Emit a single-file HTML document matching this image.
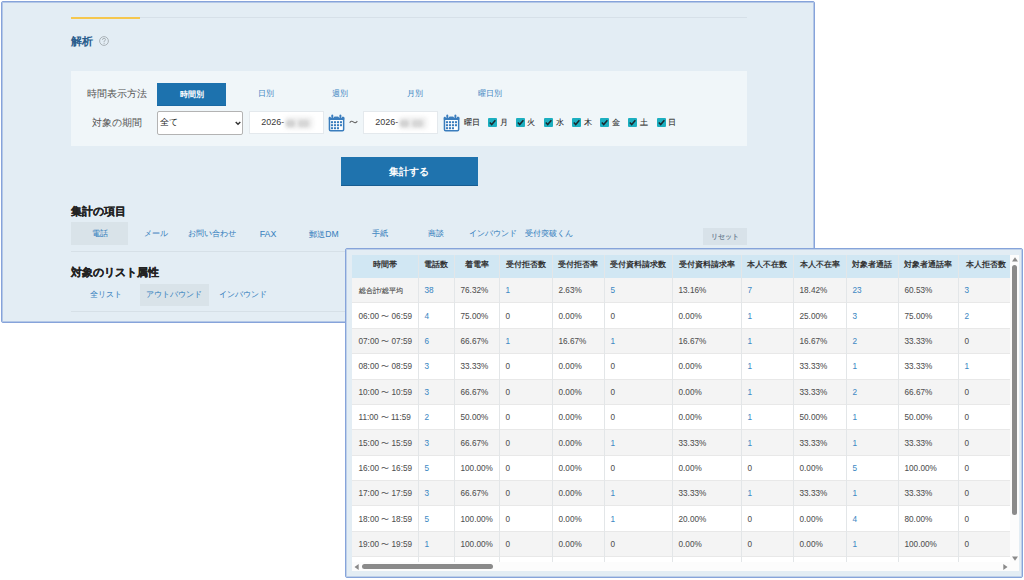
<!DOCTYPE html>
<html><head><meta charset="utf-8">
<style>
html,body{margin:0;padding:0;}
body{width:1024px;height:580px;overflow:hidden;background:#fff;position:relative;font-family:"Liberation Sans",sans-serif;color:#555;}
.a{position:absolute;white-space:nowrap;line-height:1;}
.tc{position:absolute;white-space:nowrap;line-height:1;transform:translateX(-50%);}
.lbl{font-size:9.7px;color:#555;}
.tab{font-size:8px;color:#3c85c2;}
.tab2{font-size:8px;color:#3a83c0;-webkit-text-stroke:0.05px #3a83c0;}
.cb{position:absolute;width:9px;height:9px;background:#1cafc0;border-radius:1px;}
.cb svg{position:absolute;left:0;top:0;}
.wd{font-size:8.2px;color:#2c2c2c;-webkit-text-stroke:0.1px #2c2c2c;}
.th{font-size:7.8px;font-weight:bold;color:#333;}
.td{font-size:8.2px;color:#505050;-webkit-text-stroke:0.05px #505050;}
.lk{color:#4189c4;-webkit-text-stroke:0.05px #4189c4;}
</style></head><body>

<div class="a" style="left:1px;top:1px;width:812px;height:320px;border:1px solid #86a3da;box-shadow:inset 0 0 0 1px rgba(134,163,218,0.5);background:#e3edf4;border-radius:2px;"></div>
<div class="a" style="left:71px;top:16.5px;width:69px;height:2px;background:#f5c74e;"></div>
<div class="a" style="left:140px;top:16.5px;width:607px;height:1px;background:#d6e0e8;"></div>
<div class="a" style="left:71px;top:36px;font-size:11.3px;font-weight:bold;color:#285c8c;">解析</div>
<svg class="a" style="left:99px;top:36.4px;" width="10" height="10" viewBox="0 0 10 10"><circle cx="5" cy="5" r="4.4" fill="none" stroke="#aab2b7" stroke-width="1"/><path d="M3.5 3.9 Q3.5 2.3 5 2.3 Q6.5 2.3 6.5 3.7 Q6.5 4.6 5.1 5.2 L5.1 6.3" fill="none" stroke="#aab2b7" stroke-width="1"/><circle cx="5.1" cy="7.5" r="0.6" fill="#aab2b7"/></svg>
<div class="a" style="left:71px;top:71px;width:676px;height:75px;background:#f0f6f9;"></div>
<div class="tc lbl" style="left:117px;top:89px;">時間表示方法</div>
<div class="a" style="left:157px;top:83px;width:69px;height:22px;background:#1d72ae;border-bottom:1px solid #1a69a3;"></div>
<div class="tc" style="left:191.5px;top:90.5px;font-size:8px;font-weight:bold;color:#fff;">時間別</div>
<div class="tc tab" style="left:266px;top:89.5px;">日別</div>
<div class="tc tab" style="left:340px;top:89.5px;">週別</div>
<div class="tc tab" style="left:415px;top:89.5px;">月別</div>
<div class="tc tab" style="left:490px;top:89.5px;">曜日別</div>
<div class="tc lbl" style="left:117px;top:117.5px;">対象の期間</div>
<div class="a" style="left:157px;top:111px;width:84px;height:22px;border:1px solid #b3b3b3;border-radius:2px;background:#fff;"></div>
<div class="a" style="left:160px;top:117.5px;font-size:9px;color:#222;">全て</div>
<svg class="a" style="left:235px;top:121px;" width="6" height="5" viewBox="0 0 6 5"><path d="M0.7 1 L3 3.3 L5.3 1" stroke="#333" stroke-width="1.4" fill="none"/></svg>
<div class="a" style="left:249px;top:111px;width:73px;height:21px;border:1px solid #e4e9ed;background:#fff;"></div>
<div class="a" style="left:261.3px;top:117.5px;font-size:9px;color:#3a3a3a;">2026-</div>
<div class="a" style="left:285px;top:117px;width:28px;height:12px;background:#eeeeee;border-radius:3px;filter:blur(2px);"></div>
<div class="a" style="left:286px;top:119.5px;width:9px;height:7px;background:#d2d2d2;border-radius:3px;filter:blur(1.8px);"></div>
<div class="a" style="left:298px;top:119.5px;width:11px;height:7px;background:#d6d6d6;border-radius:3px;filter:blur(1.8px);"></div>
<div class="a" style="left:363px;top:111px;width:73px;height:21px;border:1px solid #e4e9ed;background:#fff;"></div>
<div class="a" style="left:375.3px;top:117.5px;font-size:9px;color:#3a3a3a;">2026-</div>
<div class="a" style="left:399px;top:117px;width:28px;height:12px;background:#eeeeee;border-radius:3px;filter:blur(2px);"></div>
<div class="a" style="left:400px;top:119.5px;width:9px;height:7px;background:#d2d2d2;border-radius:3px;filter:blur(1.8px);"></div>
<div class="a" style="left:412px;top:119.5px;width:11px;height:7px;background:#d6d6d6;border-radius:3px;filter:blur(1.8px);"></div>
<svg class="a" style="left:349px;top:119px;" width="9" height="6" viewBox="0 0 9 6"><path d="M0.7 3.8 Q2.2 1.2 4.3 2.9 Q6.5 4.7 8.3 2.1" fill="none" stroke="#6a6a6a" stroke-width="1.1"/></svg>
<div class="a wd" style="left:464px;top:118.5px;">曜日</div>
<svg class="a" style="left:327.5px;top:114px;" width="17" height="18" viewBox="0 0 17 18"><rect x="1.45" y="3.45" width="14.2" height="13.3" rx="1.2" fill="#fff" stroke="#3a7dbd" stroke-width="1.5"/><rect x="0.7" y="2.7" width="15.7" height="3.3" rx="1" fill="#3a7dbd"/><circle cx="4.3" cy="2.2" r="1.9" fill="#fff"/><circle cx="12.4" cy="2.2" r="1.9" fill="#fff"/><rect x="3.3" y="0.6" width="2" height="3.6" rx="1" fill="#3a7dbd"/><rect x="11.4" y="0.6" width="2" height="3.6" rx="1" fill="#3a7dbd"/><rect x="2.90" y="7.20" width="2.1" height="2.0" fill="#3a7dbd"/><rect x="5.90" y="7.20" width="2.1" height="2.0" fill="#3a7dbd"/><rect x="8.90" y="7.20" width="2.1" height="2.0" fill="#3a7dbd"/><rect x="11.90" y="7.20" width="2.1" height="2.0" fill="#3a7dbd"/><rect x="2.90" y="10.20" width="2.1" height="2.0" fill="#3a7dbd"/><rect x="5.90" y="10.20" width="2.1" height="2.0" fill="#3a7dbd"/><rect x="8.90" y="10.20" width="2.1" height="2.0" fill="#3a7dbd"/><rect x="11.90" y="10.20" width="2.1" height="2.0" fill="#3a7dbd"/><rect x="2.90" y="13.20" width="2.1" height="2.0" fill="#3a7dbd"/><rect x="5.90" y="13.20" width="2.1" height="2.0" fill="#3a7dbd"/><rect x="8.90" y="13.20" width="2.1" height="2.0" fill="#3a7dbd"/></svg>
<svg class="a" style="left:442.5px;top:114px;" width="17" height="18" viewBox="0 0 17 18"><rect x="1.45" y="3.45" width="14.2" height="13.3" rx="1.2" fill="#fff" stroke="#3a7dbd" stroke-width="1.5"/><rect x="0.7" y="2.7" width="15.7" height="3.3" rx="1" fill="#3a7dbd"/><circle cx="4.3" cy="2.2" r="1.9" fill="#fff"/><circle cx="12.4" cy="2.2" r="1.9" fill="#fff"/><rect x="3.3" y="0.6" width="2" height="3.6" rx="1" fill="#3a7dbd"/><rect x="11.4" y="0.6" width="2" height="3.6" rx="1" fill="#3a7dbd"/><rect x="2.90" y="7.20" width="2.1" height="2.0" fill="#3a7dbd"/><rect x="5.90" y="7.20" width="2.1" height="2.0" fill="#3a7dbd"/><rect x="8.90" y="7.20" width="2.1" height="2.0" fill="#3a7dbd"/><rect x="11.90" y="7.20" width="2.1" height="2.0" fill="#3a7dbd"/><rect x="2.90" y="10.20" width="2.1" height="2.0" fill="#3a7dbd"/><rect x="5.90" y="10.20" width="2.1" height="2.0" fill="#3a7dbd"/><rect x="8.90" y="10.20" width="2.1" height="2.0" fill="#3a7dbd"/><rect x="11.90" y="10.20" width="2.1" height="2.0" fill="#3a7dbd"/><rect x="2.90" y="13.20" width="2.1" height="2.0" fill="#3a7dbd"/><rect x="5.90" y="13.20" width="2.1" height="2.0" fill="#3a7dbd"/><rect x="8.90" y="13.20" width="2.1" height="2.0" fill="#3a7dbd"/></svg>
<div class="cb" style="left:488px;top:118px;"><svg width="9" height="9" viewBox="0 0 9 9"><path d="M1.8 4.6 L3.7 6.6 L7.4 2.3" stroke="#1b2a30" stroke-width="1.5" fill="none"/></svg></div>
<div class="a wd" style="left:499.5px;top:118.5px;">月</div>
<div class="cb" style="left:515.5px;top:118px;"><svg width="9" height="9" viewBox="0 0 9 9"><path d="M1.8 4.6 L3.7 6.6 L7.4 2.3" stroke="#1b2a30" stroke-width="1.5" fill="none"/></svg></div>
<div class="a wd" style="left:527.0px;top:118.5px;">火</div>
<div class="cb" style="left:544px;top:118px;"><svg width="9" height="9" viewBox="0 0 9 9"><path d="M1.8 4.6 L3.7 6.6 L7.4 2.3" stroke="#1b2a30" stroke-width="1.5" fill="none"/></svg></div>
<div class="a wd" style="left:555.5px;top:118.5px;">水</div>
<div class="cb" style="left:572px;top:118px;"><svg width="9" height="9" viewBox="0 0 9 9"><path d="M1.8 4.6 L3.7 6.6 L7.4 2.3" stroke="#1b2a30" stroke-width="1.5" fill="none"/></svg></div>
<div class="a wd" style="left:583.5px;top:118.5px;">木</div>
<div class="cb" style="left:600px;top:118px;"><svg width="9" height="9" viewBox="0 0 9 9"><path d="M1.8 4.6 L3.7 6.6 L7.4 2.3" stroke="#1b2a30" stroke-width="1.5" fill="none"/></svg></div>
<div class="a wd" style="left:611.5px;top:118.5px;">金</div>
<div class="cb" style="left:628px;top:118px;"><svg width="9" height="9" viewBox="0 0 9 9"><path d="M1.8 4.6 L3.7 6.6 L7.4 2.3" stroke="#1b2a30" stroke-width="1.5" fill="none"/></svg></div>
<div class="a wd" style="left:639.5px;top:118.5px;">土</div>
<div class="cb" style="left:656.5px;top:118px;"><svg width="9" height="9" viewBox="0 0 9 9"><path d="M1.8 4.6 L3.7 6.6 L7.4 2.3" stroke="#1b2a30" stroke-width="1.5" fill="none"/></svg></div>
<div class="a wd" style="left:668.0px;top:118.5px;">日</div>
<div class="a" style="left:341px;top:157px;width:137px;height:28px;background:#1f73ae;border-bottom:1px solid #185d91;"></div>
<div class="tc" style="left:409px;top:167.3px;font-size:9.6px;font-weight:bold;color:#fff;">集計する</div>
<div class="a" style="left:71px;top:205.5px;font-size:11px;-webkit-text-stroke:0.2px #222;font-weight:bold;color:#222;">集計の項目</div>
<div class="a" style="left:71px;top:222px;width:57px;height:23px;background:#d9e3e9;"></div>
<div class="a" style="left:71px;top:251px;width:676px;height:1px;background:#d6e0e7;"></div>
<div class="a" style="left:703px;top:228px;width:44px;height:17px;background:#d8e2e9;"></div>
<div class="tc" style="left:725px;top:232.8px;font-size:7.4px;color:#6c8091;-webkit-text-stroke:0.2px #6c8091;">リセット</div>
<div class="tc tab2" style="left:99.5px;top:229.5px;">電話</div>
<div class="tc tab2" style="left:156px;top:229.5px;">メール</div>
<div class="tc tab2" style="left:212px;top:229.5px;">お問い合わせ</div>
<div class="tc tab2" style="left:268px;top:229.5px;"><span style="font-size:8.8px">FAX</span></div>
<div class="tc tab2" style="left:324px;top:229.5px;">郵送<span style="font-size:8.6px">DM</span></div>
<div class="tc tab2" style="left:380px;top:229.5px;">手紙</div>
<div class="tc tab2" style="left:436px;top:229.5px;">商談</div>
<div class="tc tab2" style="left:492.5px;top:229.5px;">インバウンド</div>
<div class="tc tab2" style="left:548.5px;top:229.5px;">受付突破くん</div>
<div class="a" style="left:71px;top:266.5px;font-size:11px;-webkit-text-stroke:0.2px #222;font-weight:bold;color:#222;">対象のリスト属性</div>
<div class="a" style="left:140px;top:283.5px;width:69px;height:22px;background:#d9e3e9;"></div>
<div class="a" style="left:71px;top:311px;width:676px;height:1px;background:#d6e0e7;"></div>
<div class="tc tab2" style="left:105.7px;top:290.5px;">全リスト</div>
<div class="tc tab2" style="left:174.4px;top:290.5px;">アウトバウンド</div>
<div class="tc tab2" style="left:243.4px;top:290.5px;">インバウンド</div>
<div class="a" style="left:345px;top:248px;width:676px;height:328px;border:1px solid #86a4da;box-shadow:inset 0 0 0 1px rgba(134,164,218,0.4);background:#e3edf4;border-radius:2px;"></div>
<div class="a" style="left:352px;top:255px;width:667px;height:316px;background:#fff;overflow:hidden;">
<div class="a" style="left:0;top:0;width:658px;height:23px;background:#d1e7f3;"></div>
<div class="a" style="left:0;top:23.00px;width:658px;height:25.38px;background:#f4f4f4;"></div>
<div class="a" style="left:0;top:47.38px;width:658px;height:1px;background:#e8e8e8;"></div>
<div class="a" style="left:0;top:48.38px;width:658px;height:25.38px;background:#fff;"></div>
<div class="a" style="left:0;top:72.76px;width:658px;height:1px;background:#e8e8e8;"></div>
<div class="a" style="left:0;top:73.76px;width:658px;height:25.38px;background:#f4f4f4;"></div>
<div class="a" style="left:0;top:98.14px;width:658px;height:1px;background:#e8e8e8;"></div>
<div class="a" style="left:0;top:99.14px;width:658px;height:25.38px;background:#fff;"></div>
<div class="a" style="left:0;top:123.52px;width:658px;height:1px;background:#e8e8e8;"></div>
<div class="a" style="left:0;top:124.52px;width:658px;height:25.38px;background:#f4f4f4;"></div>
<div class="a" style="left:0;top:148.90px;width:658px;height:1px;background:#e8e8e8;"></div>
<div class="a" style="left:0;top:149.90px;width:658px;height:25.38px;background:#fff;"></div>
<div class="a" style="left:0;top:174.28px;width:658px;height:1px;background:#e8e8e8;"></div>
<div class="a" style="left:0;top:175.28px;width:658px;height:25.38px;background:#f4f4f4;"></div>
<div class="a" style="left:0;top:199.66px;width:658px;height:1px;background:#e8e8e8;"></div>
<div class="a" style="left:0;top:200.66px;width:658px;height:25.38px;background:#fff;"></div>
<div class="a" style="left:0;top:225.04px;width:658px;height:1px;background:#e8e8e8;"></div>
<div class="a" style="left:0;top:226.04px;width:658px;height:25.38px;background:#f4f4f4;"></div>
<div class="a" style="left:0;top:250.42px;width:658px;height:1px;background:#e8e8e8;"></div>
<div class="a" style="left:0;top:251.42px;width:658px;height:25.38px;background:#fff;"></div>
<div class="a" style="left:0;top:275.80px;width:658px;height:1px;background:#e8e8e8;"></div>
<div class="a" style="left:0;top:276.80px;width:658px;height:25.38px;background:#f4f4f4;"></div>
<div class="a" style="left:0;top:301.18px;width:658px;height:1px;background:#e8e8e8;"></div>
<div class="a" style="left:0;top:302.18px;width:658px;height:25.38px;background:#fff;"></div>
<div class="a" style="left:0;top:326.56px;width:658px;height:1px;background:#e8e8e8;"></div>
<div class="a" style="left:66px;top:0;width:1px;height:307px;background:#e3e6e8;"></div>
<div class="a" style="left:102px;top:0;width:1px;height:307px;background:#e3e6e8;"></div>
<div class="a" style="left:147px;top:0;width:1px;height:307px;background:#e3e6e8;"></div>
<div class="a" style="left:200px;top:0;width:1px;height:307px;background:#e3e6e8;"></div>
<div class="a" style="left:252px;top:0;width:1px;height:307px;background:#e3e6e8;"></div>
<div class="a" style="left:320px;top:0;width:1px;height:307px;background:#e3e6e8;"></div>
<div class="a" style="left:389px;top:0;width:1px;height:307px;background:#e3e6e8;"></div>
<div class="a" style="left:441px;top:0;width:1px;height:307px;background:#e3e6e8;"></div>
<div class="a" style="left:494px;top:0;width:1px;height:307px;background:#e3e6e8;"></div>
<div class="a" style="left:546px;top:0;width:1px;height:307px;background:#e3e6e8;"></div>
<div class="a" style="left:606px;top:0;width:1px;height:307px;background:#e3e6e8;"></div>
<div class="tc th" style="left:33.0px;top:5.5px;">時間帯</div>
<div class="tc th" style="left:84.0px;top:5.5px;">電話数</div>
<div class="tc th" style="left:124.5px;top:5.5px;">着電率</div>
<div class="tc th" style="left:173.5px;top:5.5px;">受付拒否数</div>
<div class="tc th" style="left:226.0px;top:5.5px;">受付拒否率</div>
<div class="tc th" style="left:286.0px;top:5.5px;">受付資料請求数</div>
<div class="tc th" style="left:354.5px;top:5.5px;">受付資料請求率</div>
<div class="tc th" style="left:415.0px;top:5.5px;">本人不在数</div>
<div class="tc th" style="left:467.5px;top:5.5px;">本人不在率</div>
<div class="tc th" style="left:520.0px;top:5.5px;">対象者通話</div>
<div class="tc th" style="left:576.0px;top:5.5px;">対象者通話率</div>
<div class="tc th" style="left:634.0px;top:5.5px;">本人拒否数</div>
<div class="a td" style="left:6.5px;top:32.30px;font-size:7.3px;-webkit-text-stroke:0.15px #505050">総合計/総平均</div>
<div class="a td lk" style="left:72.5px;top:32.30px">38</div>
<div class="a td" style="left:108.5px;top:32.30px">76.32%</div>
<div class="a td lk" style="left:153.5px;top:32.30px">1</div>
<div class="a td" style="left:206.5px;top:32.30px">2.63%</div>
<div class="a td lk" style="left:258.5px;top:32.30px">5</div>
<div class="a td" style="left:326.5px;top:32.30px">13.16%</div>
<div class="a td lk" style="left:395.5px;top:32.30px">7</div>
<div class="a td" style="left:447.5px;top:32.30px">18.42%</div>
<div class="a td lk" style="left:500.5px;top:32.30px">23</div>
<div class="a td" style="left:552.5px;top:32.30px">60.53%</div>
<div class="a td lk" style="left:612.5px;top:32.30px">3</div>
<div class="a td" style="left:6.5px;top:57.68px">06:00 〜 06:59</div>
<div class="a td lk" style="left:72.5px;top:57.68px">4</div>
<div class="a td" style="left:108.5px;top:57.68px">75.00%</div>
<div class="a td" style="left:153.5px;top:57.68px">0</div>
<div class="a td" style="left:206.5px;top:57.68px">0.00%</div>
<div class="a td" style="left:258.5px;top:57.68px">0</div>
<div class="a td" style="left:326.5px;top:57.68px">0.00%</div>
<div class="a td lk" style="left:395.5px;top:57.68px">1</div>
<div class="a td" style="left:447.5px;top:57.68px">25.00%</div>
<div class="a td lk" style="left:500.5px;top:57.68px">3</div>
<div class="a td" style="left:552.5px;top:57.68px">75.00%</div>
<div class="a td lk" style="left:612.5px;top:57.68px">2</div>
<div class="a td" style="left:6.5px;top:83.06px">07:00 〜 07:59</div>
<div class="a td lk" style="left:72.5px;top:83.06px">6</div>
<div class="a td" style="left:108.5px;top:83.06px">66.67%</div>
<div class="a td lk" style="left:153.5px;top:83.06px">1</div>
<div class="a td" style="left:206.5px;top:83.06px">16.67%</div>
<div class="a td lk" style="left:258.5px;top:83.06px">1</div>
<div class="a td" style="left:326.5px;top:83.06px">16.67%</div>
<div class="a td lk" style="left:395.5px;top:83.06px">1</div>
<div class="a td" style="left:447.5px;top:83.06px">16.67%</div>
<div class="a td lk" style="left:500.5px;top:83.06px">2</div>
<div class="a td" style="left:552.5px;top:83.06px">33.33%</div>
<div class="a td" style="left:612.5px;top:83.06px">0</div>
<div class="a td" style="left:6.5px;top:108.44px">08:00 〜 08:59</div>
<div class="a td lk" style="left:72.5px;top:108.44px">3</div>
<div class="a td" style="left:108.5px;top:108.44px">33.33%</div>
<div class="a td" style="left:153.5px;top:108.44px">0</div>
<div class="a td" style="left:206.5px;top:108.44px">0.00%</div>
<div class="a td" style="left:258.5px;top:108.44px">0</div>
<div class="a td" style="left:326.5px;top:108.44px">0.00%</div>
<div class="a td lk" style="left:395.5px;top:108.44px">1</div>
<div class="a td" style="left:447.5px;top:108.44px">33.33%</div>
<div class="a td lk" style="left:500.5px;top:108.44px">1</div>
<div class="a td" style="left:552.5px;top:108.44px">33.33%</div>
<div class="a td lk" style="left:612.5px;top:108.44px">1</div>
<div class="a td" style="left:6.5px;top:133.82px">10:00 〜 10:59</div>
<div class="a td lk" style="left:72.5px;top:133.82px">3</div>
<div class="a td" style="left:108.5px;top:133.82px">66.67%</div>
<div class="a td" style="left:153.5px;top:133.82px">0</div>
<div class="a td" style="left:206.5px;top:133.82px">0.00%</div>
<div class="a td" style="left:258.5px;top:133.82px">0</div>
<div class="a td" style="left:326.5px;top:133.82px">0.00%</div>
<div class="a td lk" style="left:395.5px;top:133.82px">1</div>
<div class="a td" style="left:447.5px;top:133.82px">33.33%</div>
<div class="a td lk" style="left:500.5px;top:133.82px">2</div>
<div class="a td" style="left:552.5px;top:133.82px">66.67%</div>
<div class="a td" style="left:612.5px;top:133.82px">0</div>
<div class="a td" style="left:6.5px;top:159.20px">11:00 〜 11:59</div>
<div class="a td lk" style="left:72.5px;top:159.20px">2</div>
<div class="a td" style="left:108.5px;top:159.20px">50.00%</div>
<div class="a td" style="left:153.5px;top:159.20px">0</div>
<div class="a td" style="left:206.5px;top:159.20px">0.00%</div>
<div class="a td" style="left:258.5px;top:159.20px">0</div>
<div class="a td" style="left:326.5px;top:159.20px">0.00%</div>
<div class="a td lk" style="left:395.5px;top:159.20px">1</div>
<div class="a td" style="left:447.5px;top:159.20px">50.00%</div>
<div class="a td lk" style="left:500.5px;top:159.20px">1</div>
<div class="a td" style="left:552.5px;top:159.20px">50.00%</div>
<div class="a td" style="left:612.5px;top:159.20px">0</div>
<div class="a td" style="left:6.5px;top:184.58px">15:00 〜 15:59</div>
<div class="a td lk" style="left:72.5px;top:184.58px">3</div>
<div class="a td" style="left:108.5px;top:184.58px">66.67%</div>
<div class="a td" style="left:153.5px;top:184.58px">0</div>
<div class="a td" style="left:206.5px;top:184.58px">0.00%</div>
<div class="a td lk" style="left:258.5px;top:184.58px">1</div>
<div class="a td" style="left:326.5px;top:184.58px">33.33%</div>
<div class="a td lk" style="left:395.5px;top:184.58px">1</div>
<div class="a td" style="left:447.5px;top:184.58px">33.33%</div>
<div class="a td lk" style="left:500.5px;top:184.58px">1</div>
<div class="a td" style="left:552.5px;top:184.58px">33.33%</div>
<div class="a td" style="left:612.5px;top:184.58px">0</div>
<div class="a td" style="left:6.5px;top:209.96px">16:00 〜 16:59</div>
<div class="a td lk" style="left:72.5px;top:209.96px">5</div>
<div class="a td" style="left:108.5px;top:209.96px">100.00%</div>
<div class="a td" style="left:153.5px;top:209.96px">0</div>
<div class="a td" style="left:206.5px;top:209.96px">0.00%</div>
<div class="a td" style="left:258.5px;top:209.96px">0</div>
<div class="a td" style="left:326.5px;top:209.96px">0.00%</div>
<div class="a td" style="left:395.5px;top:209.96px">0</div>
<div class="a td" style="left:447.5px;top:209.96px">0.00%</div>
<div class="a td lk" style="left:500.5px;top:209.96px">5</div>
<div class="a td" style="left:552.5px;top:209.96px">100.00%</div>
<div class="a td" style="left:612.5px;top:209.96px">0</div>
<div class="a td" style="left:6.5px;top:235.34px">17:00 〜 17:59</div>
<div class="a td lk" style="left:72.5px;top:235.34px">3</div>
<div class="a td" style="left:108.5px;top:235.34px">66.67%</div>
<div class="a td" style="left:153.5px;top:235.34px">0</div>
<div class="a td" style="left:206.5px;top:235.34px">0.00%</div>
<div class="a td lk" style="left:258.5px;top:235.34px">1</div>
<div class="a td" style="left:326.5px;top:235.34px">33.33%</div>
<div class="a td lk" style="left:395.5px;top:235.34px">1</div>
<div class="a td" style="left:447.5px;top:235.34px">33.33%</div>
<div class="a td lk" style="left:500.5px;top:235.34px">1</div>
<div class="a td" style="left:552.5px;top:235.34px">33.33%</div>
<div class="a td" style="left:612.5px;top:235.34px">0</div>
<div class="a td" style="left:6.5px;top:260.72px">18:00 〜 18:59</div>
<div class="a td lk" style="left:72.5px;top:260.72px">5</div>
<div class="a td" style="left:108.5px;top:260.72px">100.00%</div>
<div class="a td" style="left:153.5px;top:260.72px">0</div>
<div class="a td" style="left:206.5px;top:260.72px">0.00%</div>
<div class="a td lk" style="left:258.5px;top:260.72px">1</div>
<div class="a td" style="left:326.5px;top:260.72px">20.00%</div>
<div class="a td" style="left:395.5px;top:260.72px">0</div>
<div class="a td" style="left:447.5px;top:260.72px">0.00%</div>
<div class="a td lk" style="left:500.5px;top:260.72px">4</div>
<div class="a td" style="left:552.5px;top:260.72px">80.00%</div>
<div class="a td" style="left:612.5px;top:260.72px">0</div>
<div class="a td" style="left:6.5px;top:286.10px">19:00 〜 19:59</div>
<div class="a td lk" style="left:72.5px;top:286.10px">1</div>
<div class="a td" style="left:108.5px;top:286.10px">100.00%</div>
<div class="a td" style="left:153.5px;top:286.10px">0</div>
<div class="a td" style="left:206.5px;top:286.10px">0.00%</div>
<div class="a td" style="left:258.5px;top:286.10px">0</div>
<div class="a td" style="left:326.5px;top:286.10px">0.00%</div>
<div class="a td" style="left:395.5px;top:286.10px">0</div>
<div class="a td" style="left:447.5px;top:286.10px">0.00%</div>
<div class="a td lk" style="left:500.5px;top:286.10px">1</div>
<div class="a td" style="left:552.5px;top:286.10px">100.00%</div>
<div class="a td" style="left:612.5px;top:286.10px">0</div>
<div class="a" style="left:658px;top:0;width:9px;height:316px;background:#fcfcfc;"></div>
<div class="a" style="left:0;top:307px;width:658px;height:9px;background:#fcfcfc;"></div>
<div class="a" style="left:660px;top:10px;width:5px;height:250px;background:#8a8a8a;border-radius:3px;"></div>
<div class="a" style="left:10px;top:309px;width:131px;height:5px;background:#8a8a8a;border-radius:3px;"></div>
<svg class="a" style="left:659.5px;top:2px;" width="6" height="5" viewBox="0 0 6 5"><path d="M0 4.5 L3 0.3 L6 4.5Z" fill="#8a8a8a"/></svg>
<svg class="a" style="left:659.5px;top:300.5px;" width="6" height="5" viewBox="0 0 6 5"><path d="M0 0.5 L3 4.7 L6 0.5Z" fill="#8a8a8a"/></svg>
<svg class="a" style="left:2px;top:308.5px;" width="5" height="6" viewBox="0 0 5 6"><path d="M4.7 0 L0.5 3 L4.7 6Z" fill="#8a8a8a"/></svg>
<svg class="a" style="left:651px;top:308.5px;" width="5" height="6" viewBox="0 0 5 6"><path d="M0.3 0 L4.5 3 L0.3 6Z" fill="#8a8a8a"/></svg>
</div>
</body></html>
